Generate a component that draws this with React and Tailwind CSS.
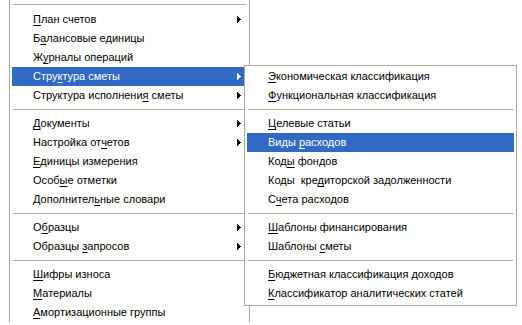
import React from "react";

const leftItems = [
  { sep: true, first: true },
  { label: "&План счетов", arrow: true },
  { label: "Б&алансовые единицы" },
  { label: "Ж&урналы операций" },
  { label: "Стру&ктура сметы", arrow: true, active: true },
  { label: "Структура исполнени&я сметы", arrow: true },
  { sep: true },
  { label: "&Документы", arrow: true },
  { label: "Настройка от&четов", arrow: true },
  { label: "&Единицы измерения" },
  { label: "Особ&ые отметки" },
  { label: "Дополнител&ьные словари" },
  { sep: true },
  { label: "О&бразцы", arrow: true },
  { label: "Образцы &запросов", arrow: true },
  { sep: true },
  { label: "&Шифры износа" },
  { label: "&Материалы" },
  { label: "&Амортизационные группы" },
];

const subItems = [
  { label: "&Экономическая классификация" },
  { label: "&Функциональная классификация" },
  { sep: true },
  { label: "&Целевые статьи" },
  { label: "Виды &расходов", active: true },
  { label: "Код&ы фондов" },
  { label: "Коды  кре&диторской задолженности" },
  { label: "С&чета расходов" },
  { sep: true },
  { label: "&Шаблоны финансирования" },
  { label: "Шаблоны &сметы" },
  { sep: true },
  { label: "&Бюджетная классификация доходов" },
  { label: "&Классификатор аналитических статей" },
];

// "&" marks the mnemonic letter, like in the Win32 resource strings
function Label({ text }) {
  const i = text.indexOf("&");
  if (i < 0) return <span>{text}</span>;
  return (
    <span>
      {text.slice(0, i)}
      <u className="underline-offset-[2px]">{text[i + 1]}</u>
      {text.slice(i + 2)}
    </span>
  );
}

function Arrow() {
  return (
    <svg width="4" height="7" viewBox="0 0 4 7" shapeRendering="crispEdges" className="fill-current">
      <rect x="0" y="0" width="1" height="7" />
      <rect x="1" y="1" width="1" height="5" />
      <rect x="2" y="2" width="1" height="3" />
      <rect x="3" y="3" width="1" height="1" />
    </svg>
  );
}

function MenuRow({ item }) {
  if (item.sep) {
    return (
      <div className={item.first ? "pt-[4px] pb-[5px] px-[1px]" : "py-[4px] px-[1px]"}>
        <div className="h-px bg-[#aca899]" />
      </div>
    );
  }
  return (
    <div
      className={
        "h-[19px] flex items-center pl-[21px] pr-[6px] whitespace-pre " +
        (item.active ? "bg-[#316ac5] text-white" : "text-black")
      }
    >
      <div className="flex-1">
        <Label text={item.label} />
      </div>
      {item.arrow && <Arrow />}
    </div>
  );
}

export default function App() {
  return (
    <div
      className="relative w-[522px] h-[325px] overflow-hidden bg-white text-[11px] leading-[19px]"
      style={{ fontFamily: '"Liberation Sans", Arial, sans-serif' }}
    >
      <div className="ml-[9px] w-[241px] border-x border-[#aca899] px-[2px] bg-white">
        {leftItems.map((item, i) => (
          <MenuRow key={i} item={item} />
        ))}
      </div>

      <div className="absolute left-[244px] top-[65px] w-[273px] border border-[#aca899] bg-white px-[2px] pt-[1px] pb-[2px]">
        {subItems.map((item, i) => (
          <MenuRow key={i} item={item} />
        ))}
      </div>
    </div>
  );
}
